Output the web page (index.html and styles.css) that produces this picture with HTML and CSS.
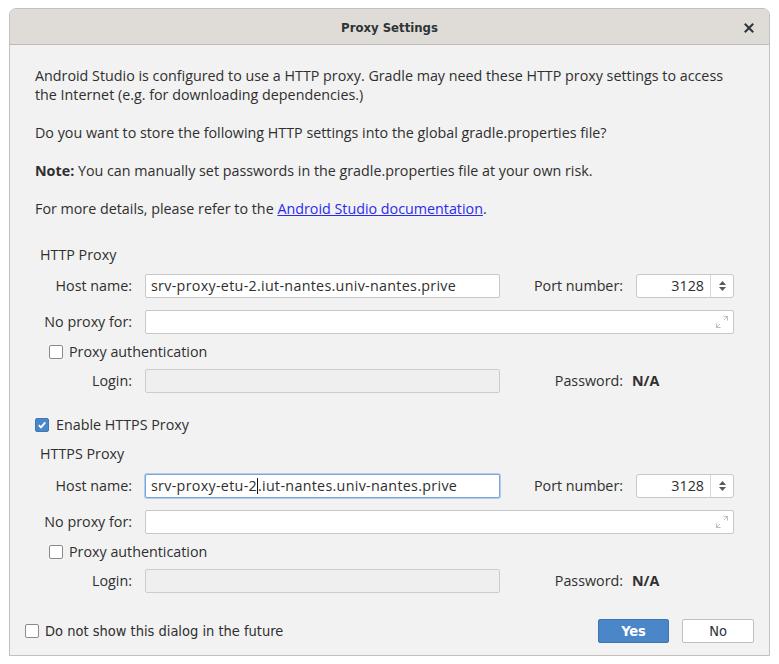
FILE: index.html
```html
<!DOCTYPE html>
<html>
<head>
<meta charset="utf-8">
<link rel="stylesheet" href="styles.css">
</head>
<body>
<div class="window">
  <div class="titlebar">
    <span class="title">Proxy Settings</span>
    <span class="close"><svg width="10" height="10" viewBox="0 0 10 10"><path d="M1.5 1.5L8.5 8.5M8.5 1.5L1.5 8.5" stroke="#2e3436" stroke-width="2" stroke-linecap="square"/></svg></span>
  </div>
  <div class="content">
    <p>Android Studio is configured to use a HTTP proxy. Gradle may need these HTTP proxy settings to access<br>the Internet (e.g. for downloading dependencies.)</p>
    <p>Do you want to store the following HTTP settings into the global gradle.properties file?</p>
    <p><b>Note:</b> You can manually set passwords in the gradle.properties file at your own risk.</p>
    <p>For more details, please refer to the <a class="link">Android Studio documentation</a>.</p>

    <div class="section-title first">HTTP Proxy</div>
    <div class="form form-http">
      <div class="lbl">Host name:</div>
      <div class="field">srv-proxy-etu-2.iut-nantes.univ-nantes.prive</div>
      <div class="lbl">Port number:</div>
      <div class="spinner"><span class="spin-val">3128</span><span class="spin-btn"><svg width="9" height="12" viewBox="0 0 9 12"><path d="M4.5 1L8 5H1Z M4.5 11L8 7H1Z" fill="#5a5a5a"/></svg></span></div>

      <div class="lbl">No proxy for:</div>
      <div class="field wide"><svg class="expand" width="12" height="12" viewBox="0 0 12 12"><path d="M7.5 0.5H11.5V4.5M11.5 0.5L8 4M4.5 11.5H0.5V7.5M0.5 11.5L4 8" stroke="#bdbdbd" fill="none" stroke-width="1"/></svg></div>

      <div class="check-row"><span class="box"></span><span>Proxy authentication</span></div>

      <div class="lbl">Login:</div>
      <div class="field disabled"></div>
      <div class="lbl">Password:</div>
      <div class="na">N/A</div>
    </div>

    <div class="enable"><span class="box checked"><svg width="10" height="10" viewBox="0 0 10 10"><path d="M1.8 5.2L4 7.4L8.3 2.4" stroke="#fff" stroke-width="1.8" fill="none"/></svg></span><span>Enable HTTPS Proxy</span></div>

    <div class="section-title second">HTTPS Proxy</div>
    <div class="form form-https">
      <div class="lbl">Host name:</div>
      <div class="field focused">srv-proxy-etu-2<span class="caret"></span>.iut-nantes.univ-nantes.prive</div>
      <div class="lbl">Port number:</div>
      <div class="spinner"><span class="spin-val">3128</span><span class="spin-btn"><svg width="9" height="12" viewBox="0 0 9 12"><path d="M4.5 1L8 5H1Z M4.5 11L8 7H1Z" fill="#5a5a5a"/></svg></span></div>

      <div class="lbl">No proxy for:</div>
      <div class="field wide"><svg class="expand" width="12" height="12" viewBox="0 0 12 12"><path d="M7.5 0.5H11.5V4.5M11.5 0.5L8 4M4.5 11.5H0.5V7.5M0.5 11.5L4 8" stroke="#bdbdbd" fill="none" stroke-width="1"/></svg></div>

      <div class="check-row"><span class="box"></span><span>Proxy authentication</span></div>

      <div class="lbl">Login:</div>
      <div class="field disabled"></div>
      <div class="lbl">Password:</div>
      <div class="na">N/A</div>
    </div>
  </div>
  <div class="footer">
    <div class="dont"><span class="box"></span><span>Do not show this dialog in the future</span></div>
    <div class="buttons">
      <div class="btn yes">Yes</div>
      <div class="btn no">No</div>
    </div>
  </div>
</div>
</body>
</html>
```
FILE: styles.css
```css
html, body {
  margin: 0;
  padding: 0;
  background: #ffffff;
}
body {
  font-family: "Open Sans", "Noto Sans", sans-serif;
  font-size: 14.3px;
  color: #2f2f2f;
}
.window {
  box-sizing: border-box;
  margin: 8px 0 0 9px;
  width: 761px;
  height: 648px;
  border: 1px solid #c3bfbb;
  border-radius: 7px 7px 0 0;
  background: #f2f2f2;
  display: flex;
  flex-direction: column;
  overflow: hidden;
}
.titlebar {
  height: 35px;
  flex: none;
  background: #dfdcd8;
  border-bottom: 1px solid #c0bbb5;
  display: flex;
  align-items: center;
  justify-content: center;
  position: relative;
}
.title {
  font-family: "DejaVu Sans Condensed", "Liberation Sans Narrow", sans-serif;
  font-weight: bold;
  font-size: 13px;
  color: #2e3436;
  margin-top: 1px;
}
.close {
  position: absolute;
  right: 15px;
  top: 14px;
  width: 10px;
  height: 10px;
  display: flex;
}
.content {
  padding: 21px 0 0 25px;
}
p {
  margin: 0 0 19px;
  line-height: 19px;
}
p b {
  font-weight: 700;
}
.link {
  color: #2b2bef;
  text-decoration: underline;
}
.section-title {
  padding-left: 5px;
  line-height: 20px;
}
.section-title.first {
  margin-top: 27px;
}
.section-title.second {
  margin-top: 9px;
}
.form {
  display: grid;
  grid-template-columns: 97px 355px 110px 98px;
  grid-template-rows: 24px 24px 11px 24px;
  column-gap: 13px;
  row-gap: 12px;
  align-items: center;
}
.form-http {
  margin-top: 9px;
}
.form-https {
  margin-top: 10px;
}
.lbl {
  text-align: right;
  white-space: nowrap;
  line-height: 20px;
}
.field {
  box-sizing: border-box;
  height: 24px;
  background: #fff;
  border: 1px solid #c8c8c8;
  border-radius: 2px;
  padding: 0 5px;
  line-height: 22px;
  white-space: nowrap;
  letter-spacing: 0.3px;
  position: relative;
}
.field.wide {
  grid-column: 2 / 5;
}
.field.disabled {
  background: #efefef;
  border-color: #cdcdcd;
}
.field.focused {
  border-color: #7ba6da;
  box-shadow: 0 0 0 1px #b4cdee;
}
.caret {
  display: inline-block;
  width: 1px;
  height: 16px;
  background: #111;
  vertical-align: -3px;
}
.expand {
  position: absolute;
  right: 5px;
  top: 5px;
}
.spinner {
  box-sizing: border-box;
  height: 24px;
  background: #fff;
  border: 1px solid #c8c8c8;
  border-radius: 3px;
  display: flex;
}
.spin-val {
  flex: 1;
  text-align: right;
  padding-right: 6px;
  line-height: 22px;
  border-right: 1px solid #d6d6d6;
}
.spin-btn {
  width: 22px;
  display: flex;
  align-items: center;
  justify-content: center;
}
.check-row {
  grid-column: 1 / 5;
  display: flex;
  align-items: center;
  gap: 6px;
  padding-left: 14px;
  line-height: 20px;
}
.box {
  box-sizing: border-box;
  width: 14px;
  height: 14px;
  flex: none;
  background: #fff;
  border: 1px solid #8a8a8a;
  border-radius: 2px;
  display: flex;
  align-items: center;
  justify-content: center;
}
.box.checked {
  background: #4a86c8;
  border-color: #3f78b8;
}
.na {
  font-weight: 700;
  margin-left: -4px;
  line-height: 20px;
}
.enable {
  margin-top: 22px;
  display: flex;
  align-items: center;
  gap: 7px;
  line-height: 20px;
}
.footer {
  margin-top: auto;
  padding: 0 15px 12px 15px;
  display: flex;
  align-items: center;
  justify-content: space-between;
  font-family: "DejaVu Sans Condensed", "Liberation Sans Narrow", sans-serif;
  font-size: 14.5px;
}
.dont {
  display: flex;
  align-items: center;
  gap: 6px;
}
.buttons {
  display: flex;
  gap: 13px;
}
.btn {
  box-sizing: border-box;
  height: 24px;
  line-height: 22px;
  text-align: center;
  border-radius: 2px;
}
.btn.yes {
  width: 71px;
  background: #4a86c8;
  border: 1px solid #3e74b0;
  color: #fff;
  font-weight: bold;
}
.btn.no {
  width: 72px;
  background: #fff;
  border: 1px solid #c0c0c0;
  color: #2e3436;
}
```
